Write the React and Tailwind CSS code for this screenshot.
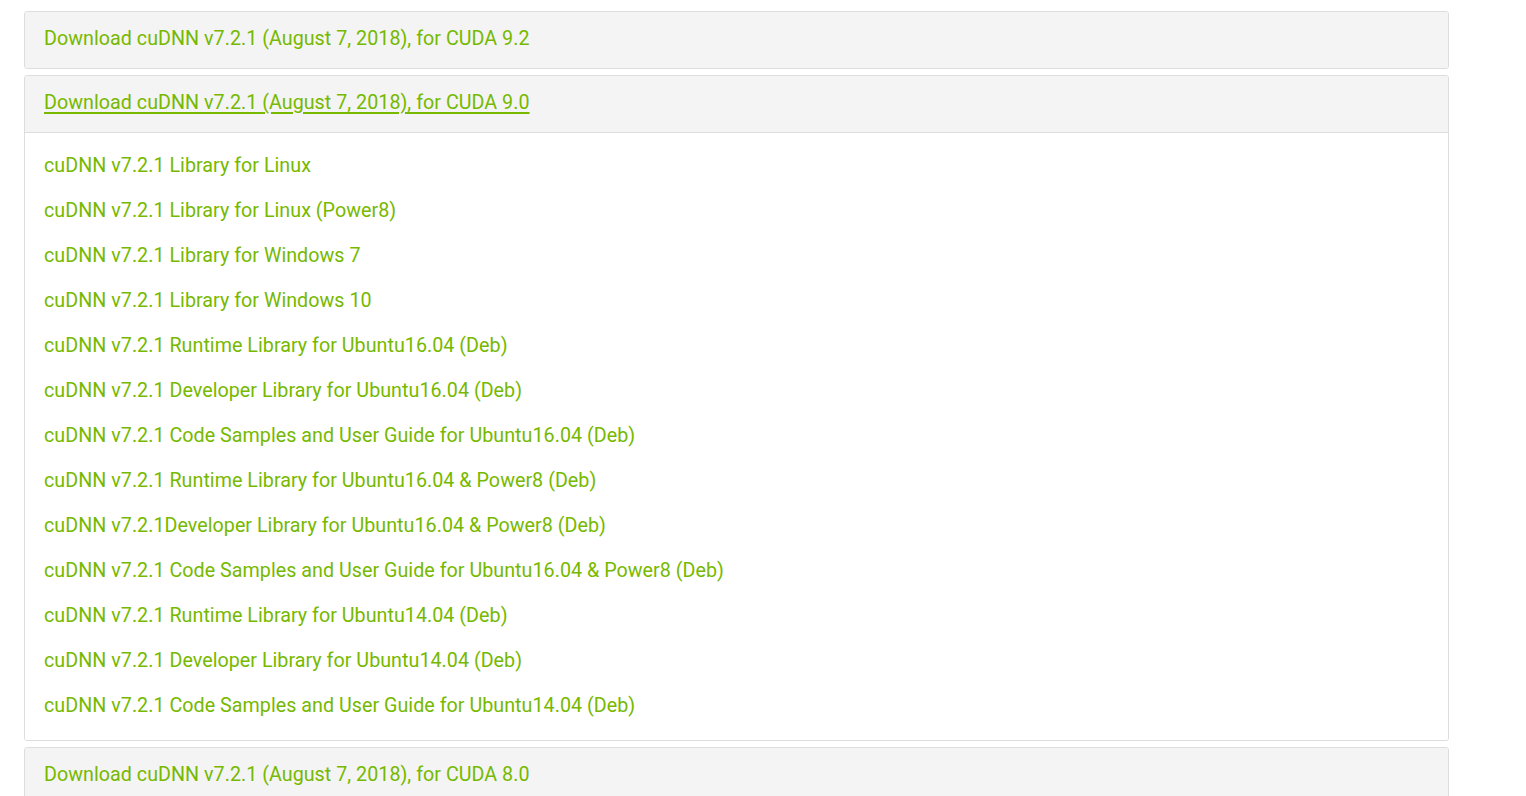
import React from "react";

const items = [
  "cuDNN v7.2.1 Library for Linux",
  "cuDNN v7.2.1 Library for Linux (Power8)",
  "cuDNN v7.2.1 Library for Windows 7",
  "cuDNN v7.2.1 Library for Windows 10",
  "cuDNN v7.2.1 Runtime Library for Ubuntu16.04 (Deb)",
  "cuDNN v7.2.1 Developer Library for Ubuntu16.04 (Deb)",
  "cuDNN v7.2.1 Code Samples and User Guide for Ubuntu16.04 (Deb)",
  "cuDNN v7.2.1 Runtime Library for Ubuntu16.04 & Power8 (Deb)",
  "cuDNN v7.2.1Developer Library for Ubuntu16.04 & Power8 (Deb)",
  "cuDNN v7.2.1 Code Samples and User Guide for Ubuntu16.04 & Power8 (Deb)",
  "cuDNN v7.2.1 Runtime Library for Ubuntu14.04 (Deb)",
  "cuDNN v7.2.1 Developer Library for Ubuntu14.04 (Deb)",
  "cuDNN v7.2.1 Code Samples and User Guide for Ubuntu14.04 (Deb)",
];

const PanelHeader = ({ children, underline = false }) => (
  <div className="h-[56px] flex items-center px-[19px] pb-[3px] bg-[#f4f4f4]">
    <a href="#" className={`text-[#76b900] ${underline ? "underline decoration-2 decoration-[#76b900] underline-offset-[3px]" : ""}`}>{children}</a>
  </div>
);

export default function App() {
  return (
    <div className="min-h-[796px] bg-white font-['Roboto',sans-serif] text-[19.7px] tracking-[0.03px] pt-[11px]">
      <div className="w-[1425px] ml-[24px] flex flex-col gap-[6px]">
        <div className="border border-[#dddddd] rounded-[3px] overflow-hidden">
          <PanelHeader>Download cuDNN v7.2.1 (August 7, 2018), for CUDA 9.2</PanelHeader>
        </div>
        <div className="border border-[#dddddd] rounded-[3px] overflow-hidden">
          <PanelHeader underline>Download cuDNN v7.2.1 (August 7, 2018), for CUDA 9.0</PanelHeader>
          <div className="border-t border-[#dddddd] bg-white px-[19px] pt-[10px] pb-[12px] flex flex-col">
            {items.map((t) => (
              <a key={t} href="#" className="h-[45px] flex items-center pt-[1px] text-[#76b900]">{t}</a>
            ))}
          </div>
        </div>
        <div className="border border-[#dddddd] rounded-[3px] overflow-hidden">
          <PanelHeader>Download cuDNN v7.2.1 (August 7, 2018), for CUDA 8.0</PanelHeader>
        </div>
      </div>
    </div>
  );
}
